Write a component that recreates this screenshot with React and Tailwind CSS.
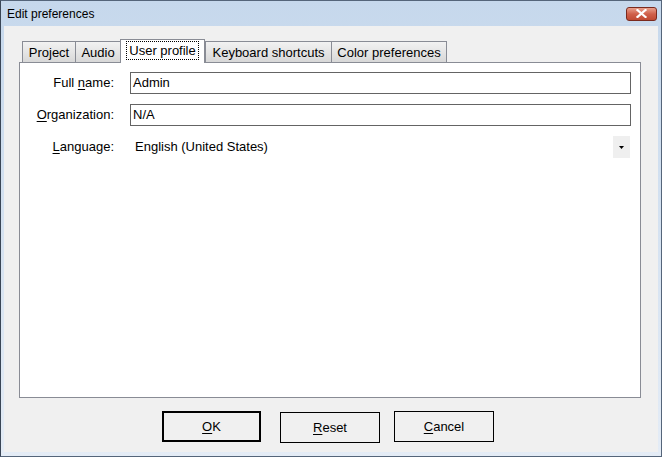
import React from "react";

function U({ children }) {
  return <span className="underline underline-offset-2">{children}</span>;
}

const tabs = [
  { label: "Project", w: "w-[54px]" },
  { label: "Audio", w: "w-[46px]" },
  { label: "User profile", w: "w-[85px]", active: true },
  { label: "Keyboard shortcuts", w: "w-[127px]" },
  { label: "Color preferences", w: "w-[116px]" },
];

export default function App() {
  return (
    <div className="flex h-[457px] w-[662px] flex-col border border-[#55657a] border-l-[#3a4656] bg-gradient-to-b from-[#c6d8ec] to-[#e4ecf6] font-['Liberation_Sans',Arial,sans-serif] text-[13px] text-black">
      {/* Title bar */}
      <div className="flex h-[25px] shrink-0 items-center justify-between pl-[6px] pr-[4px]">
        <span className="text-[12px] leading-none text-[#000]">Edit preferences</span>
        <button className="flex h-[14px] w-[31px] items-center justify-center rounded-[3px] border border-[#7a2a1e] bg-gradient-to-b from-[#e8a08c] via-[#d0604a] to-[#c04a32]">
          <svg width="11" height="9" viewBox="0 0 11 9">
            <path d="M1.5 1 L9.5 8 M9.5 1 L1.5 8" stroke="#ffffff" strokeWidth="2.2" strokeLinecap="square" />
          </svg>
        </button>
      </div>

      {/* Client area */}
      <div className="mx-[3px] mb-[4px] flex flex-1 flex-col bg-[#f0f0f0] pl-[15px] pr-[16px] pt-[13px]">
        {/* Tabs */}
        <div className="relative z-10 ml-[3px] flex h-[23px] items-end">
          {tabs.map((t) =>
            t.active ? (
              <div
                key={t.label}
                className={`${t.w} -mb-px flex h-[24px] items-start justify-center border border-b-0 border-[#898c95] bg-white pt-[1px]`}
              >
                <span className="border border-dotted border-black px-[2px] leading-[17px]">{t.label}</span>
              </div>
            ) : (
              <div
                key={t.label}
                className={`${t.w} -mr-px flex h-[21px] items-center justify-center border border-b-0 border-[#898c95] bg-gradient-to-b from-[#f2f2f2] to-[#d8d8d8] leading-none`}
              >
                {t.label}
              </div>
            )
          )}
        </div>

        {/* Panel */}
        <div className="flex h-[336px] w-[622px] flex-col gap-[10px] border border-[#898c95] bg-white pt-[9px]">
          <div className="flex h-[22px] items-center">
            <label className="w-[94px] text-right">
              Full <U>n</U>ame:
            </label>
            <div className="ml-[16px] flex h-[22px] w-[501px] items-center border border-[#646464] bg-white pl-[2px]">
              Admin
            </div>
          </div>
          <div className="flex h-[22px] items-center">
            <label className="w-[94px] text-right">
              <U>O</U>rganization:
            </label>
            <div className="ml-[16px] flex h-[22px] w-[501px] items-center border border-[#646464] bg-white pl-[2px]">
              N/A
            </div>
          </div>
          <div className="flex h-[22px] items-center">
            <label className="w-[94px] text-right">
              <U>L</U>anguage:
            </label>
            <div className="ml-[16px] flex h-[22px] w-[501px] items-center justify-between pl-[5px]">
              <span>English (United States)</span>
              <div className="mr-[1px] flex h-[22px] w-[17px] items-center justify-center bg-[#efefef]">
                <svg width="5" height="3" viewBox="0 0 5 3">
                  <path d="M0 0 H5 L2.5 3 Z" fill="#000" />
                </svg>
              </div>
            </div>
          </div>
        </div>

        {/* Buttons */}
        <div className="mt-[13px] flex items-start pl-[143px]">
          <button className="flex h-[31px] w-[99px] items-center justify-center border-2 border-black bg-[#f0f0f0]">
            <U>O</U>K
          </button>
          <button className="ml-[19px] mt-[1px] flex h-[31px] w-[100px] items-center justify-center border border-black bg-[#f0f0f0]">
            <U>R</U>eset
          </button>
          <button className="ml-[14px] flex h-[31px] w-[100px] items-center justify-center border border-black bg-[#f0f0f0]">
            <U>C</U>ancel
          </button>
        </div>
      </div>
    </div>
  );
}
